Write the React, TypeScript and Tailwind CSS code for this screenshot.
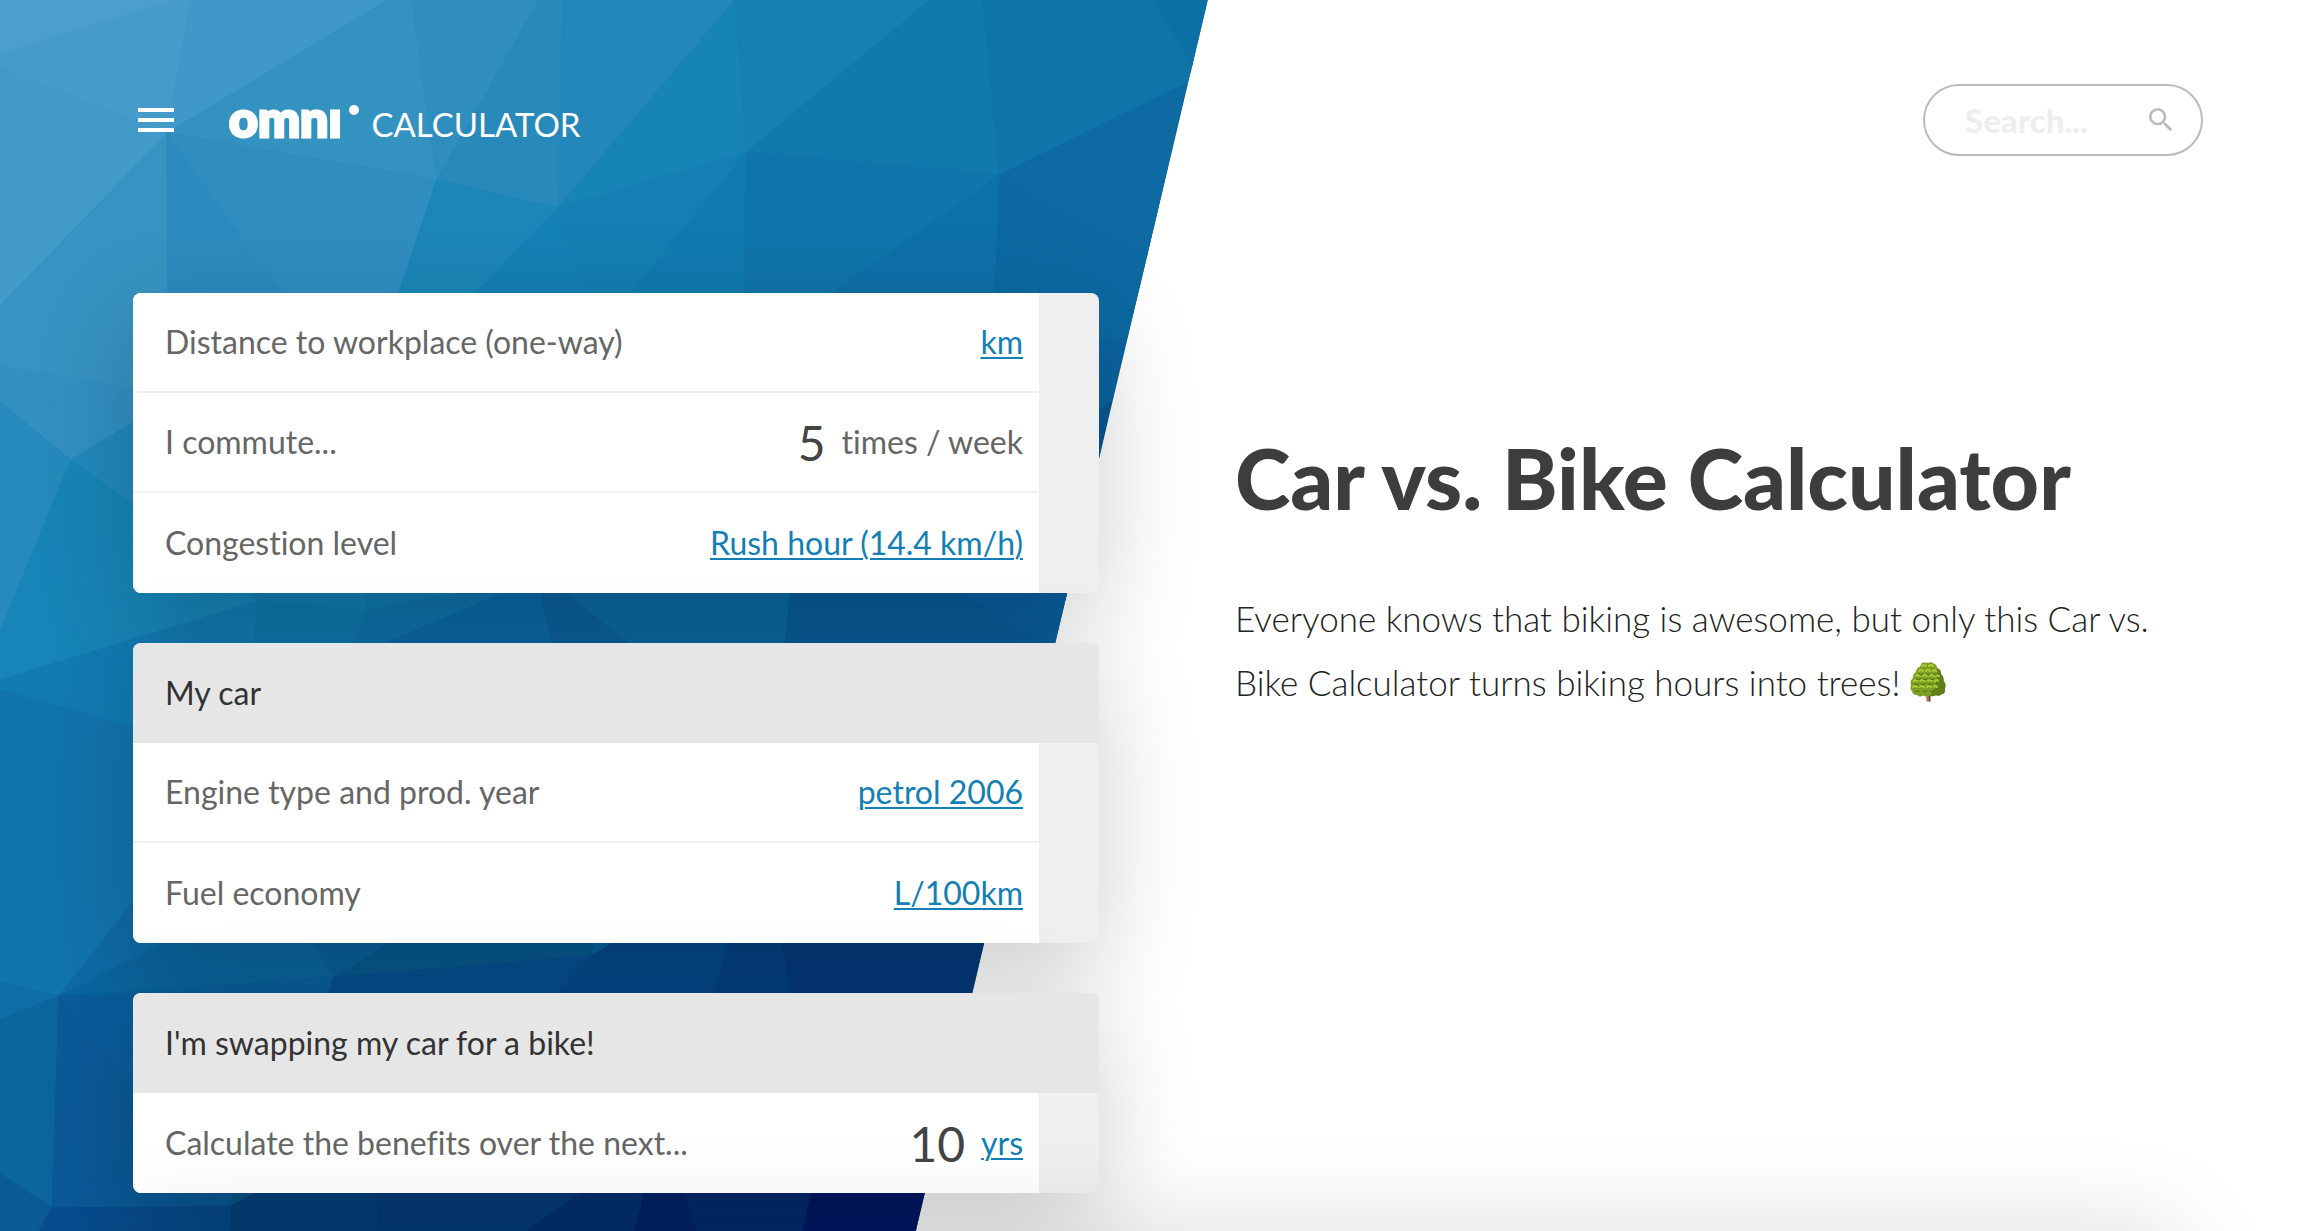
import { useState } from "react";
import type { ReactNode } from "react";
import { MdMenu, MdSearch } from "react-icons/md";

// [fill, polygon points], painted in order
const FACETS: [string, string][] = [
    ["#4b9fce", "0,0 177,0 0,54"],
    ["#459ccb", "177,0 191,0 167,133 0,67 0,54"],
    ["#3f98c7", "191,0 388,0 167,133"],
    ["#3492c1", "388,0 412,0 437,180 167,133"],
    ["#2f8ebe", "412,0 539,0 437,180"],
    ["#278abb", "539,0 563,0 558,208 437,180"],
    ["#2388b9", "563,0 735,0 558,208"],
    ["#1684b5", "735,0 747,152 558,208"],
    ["#1481b2", "735,0 930,0 747,152"],
    ["#117aad", "930,0 983,0 1000,175 747,152"],
    ["#1076aa", "983,0 1136,0 1000,175"],
    ["#0f74a7", "1136,0 1153,0 1193,65 1187,83 1000,175"],
    ["#0d70a5", "1153,0 1210,0 1193,65"],
    ["#0e6aa2", "1187,83 1000,175 1148,255"],
    ["#429ac8", "0,67 167,133 0,306"],
    ["#3793c2", "0,306 167,133 168,400 0,366"],
    ["#2c8bbe", "167,133 437,180 395,330 168,330"],
    ["#2f8dbf", "167,133 437,180 395,330 310,330"],
    ["#1c86b8", "437,180 558,208 457,330 386,330"],
    ["#1481b4", "558,208 440,330 600,330"],
    ["#137fb2", "558,208 747,152 600,330"],
    ["#117bb0", "747,152 600,330 743,330"],
    ["#1075ab", "747,152 1000,175 780,330 743,330"],
    ["#0e70a8", "1000,175 780,330 994,330"],
    ["#0c69a1", "1000,175 1148,255 1127,338 1100,342 993,360"],
    ["#0b64a0", "1127,338 1090,344 1090,418 1111,402"],
    ["#095795", "1111,402 1090,418 1060,600 1070,600"],
    ["#3290c2", "0,366 133,389 150,389 150,412 71,460 0,402"],
    ["#268abc", "0,402 71,460 5,620 0,632"],
    ["#2189bd", "71,460 150,412 150,517"],
    ["#1785b7", "0,632 5,620 71,460 150,517 258,601 0,680"],
    ["#1482b8", "150,517 300,560 258,601"],
    ["#127bb2", "0,680 258,601 253,660 150,732 0,690"],
    ["#1274ad", "0,690 150,732 150,880 59,996 0,982"],
    ["#117db0", "258,601 240,560 368,560 366,610"],
    ["#0f77ab", "258,601 366,610 354,660 253,660"],
    ["#1078ac", "366,610 368,560 530,560 504,593 460,593"],
    ["#0f72a9", "366,610 460,593 504,593 385,643 354,643"],
    ["#0b69a5", "504,593 545,593 556,660 345,660"],
    ["#0b619b", "538,580 560,593 630,643 640,660 556,660"],
    ["#0b69a0", "550,580 792,580 783,660 650,660 630,643"],
    ["#095c98", "792,580 940,580 1045,643 1060,660 783,660"],
    ["#0a5e9c", "940,580 1075,580 1055,650 1045,643"],
    ["#0f6ba5", "150,880 59,996 165,943 200,920"],
    ["#0e6ca8", "0,982 59,996 0,1020"],
    ["#0b669f", "59,996 200,925 312,925 334,977"],
    ["#0a609a", "312,943 300,925 420,925 334,977"],
    ["#08598f", "334,977 420,925 594,925 592,956"],
    ["#09619c", "59,996 334,977 327,1010 133,1010"],
    ["#075090", "334,977 592,956 540,1010 322,1010"],
    ["#06498a", "592,956 540,1010 715,1010 735,925 640,925"],
    ["#054282", "735,925 708,1010 800,1010 780,925"],
    ["#053a7c", "780,925 1000,925 970,1010 793,1010"],
    ["#0d659e", "0,1020 59,996 52,1208 0,1174"],
    ["#0b5a98", "59,996 52,1208 231,1206 231,1010"],
    ["#0a5c9b", "59,996 133,996 150,1100 133,1084"],
    ["#0b5a94", "0,1174 52,1208 39,1231 0,1231"],
    ["#084c8e", "52,1208 231,1206 231,1231 39,1231"],
    ["#09578e", "231,1206 237,1180 290,1180 260,1193"],
    ["#064380", "231,1206 280,1180 378,1180 378,1231 231,1231"],
    ["#053e7c", "378,1180 600,1180 527,1231 378,1231"],
    ["#043274", "600,1180 648,1180 635,1231 527,1231"],
    ["#03256c", "648,1180 682,1180 697,1231 635,1231"],
    ["#032c72", "682,1180 815,1180 803,1231 697,1231"],
    ["#021866", "815,1180 930,1180 918,1231 803,1231"],
];

function Backdrop() {
    return (
        <svg
            aria-hidden="true"
            className="absolute inset-y-0 left-0 h-full w-[53%]"
            viewBox="0 0 1224 1231"
            preserveAspectRatio="none"
        >
            <defs>
                <clipPath id="slant">
                    <polygon points="0,0 1208,0 916,1231 0,1231" />
                </clipPath>
            </defs>
            <g clipPath="url(#slant)">
                <rect width="1224" height="1231" fill="#0b619b" />
                {FACETS.map(([fill, points]) => (
                    <polygon key={points} points={points} fill={fill} stroke={fill} />
                ))}
            </g>
        </svg>
    );
}

function Tree() {
    return (
        <svg role="img" aria-label="tree" viewBox="0 0 36 40" className="inline-block h-10 w-9 align-[-6px]">
            <path d="M16 30h4.500l-.5 9.500h-3.500z" fill="#a87858" />
            <path d="M18.500 32h2v7.500h-1.500z" fill="#74492f" />
            <path
                d="M11 2c2-2 5-1.500 7-1 2-1.500 5-.5 6 1 2 0 3 2 3 4 3 1 4 3 4 6 2 2 3 4 2.500 7 2 2 2.500 5 1.500 7 .5 4-1 6-3 6-2 2-5 2-6 1-2 1.500-5 1.500-6 .5-2 1.500-5 1.500-6.500 0-2 1.500-5 1.500-6-.5-3 .5-5-1-5.500-4-2-1-1.500-4-1-6-1-3 0-5 2-7 0-3 1-5 3-6 0-3 2-5 4-5 0-1 0-1.500 1-2z"
                fill="#7c9f22"
            />
            <path
                d="M27 6c3 1 4 3 4 6 2 2 3 4 2.500 7 2 2 2.500 5 1.500 7 .5 4-1 6-3 6-2 2-5 2-6 1-2 1.500-5 1.500-6 .5 5-6 8-15 7-26.500z"
                fill="#5f7f17"
            />
            <g fill="none" stroke="#a9cb3c" strokeWidth="2" strokeLinecap="round">
                <path d="M12 4q2-2 4 0M19 4q2-2 4 0M9 9q2-2 4 0M16 9q2-2 4 0M23 9q2-2 3 0" />
                <path d="M6 14q2-2 4 0M13 14q2-2 4 0M20 14q2-2 4 0M26 14q1-1 3 0" />
                <path d="M4 19q2-2 4 0M11 19q2-2 4 0M18 19q2-2 4 0M25 19q2-2 3 0" />
                <path d="M3 25q2-2 4 0M10 25q2-2 4 0M17 25q2-2 4 0M24 25q2-2 3 0" />
            </g>
            <g fill="none" stroke="#4f6d16" strokeWidth="1" strokeLinecap="round">
                <path d="M9 12q2 2 4 0M16 12q2 2 4 0M23 12q2 2 4 0M6 17q2 2 4 0M13 17q2 2 4 0" />
                <path d="M20 17q2 2 4 0M4 22q2 2 4 0M11 22q2 2 4 0M18 22q2 2 4 0M5 29q2 2 4 0M13 29q2 2 4 0M20 29q2 2 4 0" />
            </g>
        </svg>
    );
}

function Card({ title, children }: { title?: string; children: ReactNode }) {
    return (
        <section className="overflow-hidden rounded-lg bg-[#efefef] shadow-[0_30px_100px_rgba(0,0,0,0.2)]">
            {title && (
                <h2 className="flex h-[100px] items-center bg-[#e6e6e6] px-8 text-[#333]">{title}</h2>
            )}
            <div className="mr-[60px] divide-y-2 divide-[#efefef] bg-white">{children}</div>
        </section>
    );
}

interface RowProps {
    id: string;
    label: string;
    unit: string;
    value?: string;
    plain?: boolean;
}

function Row({ id, label, unit, value, plain }: RowProps) {
    const [current, setCurrent] = useState(value ?? "");

    return (
        <div className="flex h-[100px] items-center pr-4 pl-8 text-[#666]">
            <label htmlFor={id} className="whitespace-nowrap">
                {label}
            </label>
            {value === undefined ? (
                <span className="flex-1" />
            ) : (
                <input
                    id={id}
                    type="text"
                    inputMode="decimal"
                    className="mr-4 min-w-0 flex-1 bg-transparent text-right text-5xl text-[#444] outline-none"
                    value={current}
                    onChange={(e) => setCurrent(e.target.value)}
                />
            )}
            {plain ? (
                <span className="whitespace-nowrap">{unit}</span>
            ) : (
                <a
                    href="#"
                    id={value === undefined ? id : undefined}
                    className="whitespace-nowrap text-[#137fb5] underline decoration-2 underline-offset-3"
                >
                    {unit}
                </a>
            )}
        </div>
    );
}

export default function App() {
    const [query, setQuery] = useState("");

    return (
        <div className="relative min-h-screen overflow-hidden bg-white font-['Lato',sans-serif] text-[32px] leading-10 [font-variant-ligatures:none]">
            <Backdrop />

            <div className="relative">
                <header className="flex items-center justify-between pt-[84px] pr-[106px] pl-[132px]">
                    <div className="flex items-center gap-[49px]">
                        <button type="button" aria-label="Menu" className="text-white">
                            <MdMenu size={48} />
                        </button>
                        <a href="#" aria-label="omni calculator" className="flex items-baseline pb-1 text-white">
                            <span className="text-[50px] leading-none font-black [-webkit-text-stroke:3px_white]">
                                omnı
                            </span>
                            <span className="mt-3 mr-3 ml-2 size-[10px] self-start rounded-full bg-white" />
                            <span className="text-[33px] leading-none">CALCULATOR</span>
                        </a>
                    </div>
                    <form
                        role="search"
                        onSubmit={(e) => e.preventDefault()}
                        className="flex h-[72px] w-[280px] items-center rounded-full border-2 border-[#bbb] pr-6 pl-10"
                    >
                        <input
                            type="text"
                            aria-label="Search"
                            placeholder="Search..."
                            className="min-w-0 flex-1 bg-transparent text-[33px] font-black text-[#444] outline-none placeholder:text-[#eee]"
                            value={query}
                            onChange={(e) => setQuery(e.target.value)}
                        />
                        <button type="submit" aria-label="Submit search" className="text-[#bbb]">
                            <MdSearch size={32} />
                        </button>
                    </form>
                </header>

                <main className="grid grid-cols-[966fr_941fr] gap-[136px] px-[133px] pt-[137px] pb-[38px]">
                    <div className="flex min-w-0 flex-col gap-[50px]">
                        <Card>
                            <Row id="distance" label="Distance to workplace (one-way)" value="" unit="km" />
                            <Row id="commute" label="I commute..." value="5" unit="times / week" plain />
                            <Row id="congestion" label="Congestion level" unit="Rush hour (14.4 km/h)" />
                        </Card>
                        <Card title="My car">
                            <Row id="engine" label="Engine type and prod. year" unit="petrol 2006" />
                            <Row id="fuel" label="Fuel economy" value="" unit="L/100km" />
                        </Card>
                        <Card title="I'm swapping my car for a bike!">
                            <Row id="period" label="Calculate the benefits over the next..." value="10" unit="yrs" />
                        </Card>
                    </div>

                    <div className="min-w-0 pt-[135px]">
                        <h1 className="text-[84px] leading-[100px] font-black text-[#3d3d3d]">
                            Car vs. Bike Calculator
                        </h1>
                        <p className="mt-[58px] text-[35px] leading-[64px] font-light text-[#222]">
                            Everyone knows that biking is awesome, but only this Car vs. Bike Calculator turns biking
                            hours into trees! <Tree />
                        </p>
                    </div>
                </main>
            </div>

            {/* shadow cast upwards by the next section */}
            <div className="pointer-events-none absolute top-full right-[133px] left-[133px] h-40 shadow-[0_0_100px_rgba(0,0,0,0.14)]" />
        </div>
    );
}
